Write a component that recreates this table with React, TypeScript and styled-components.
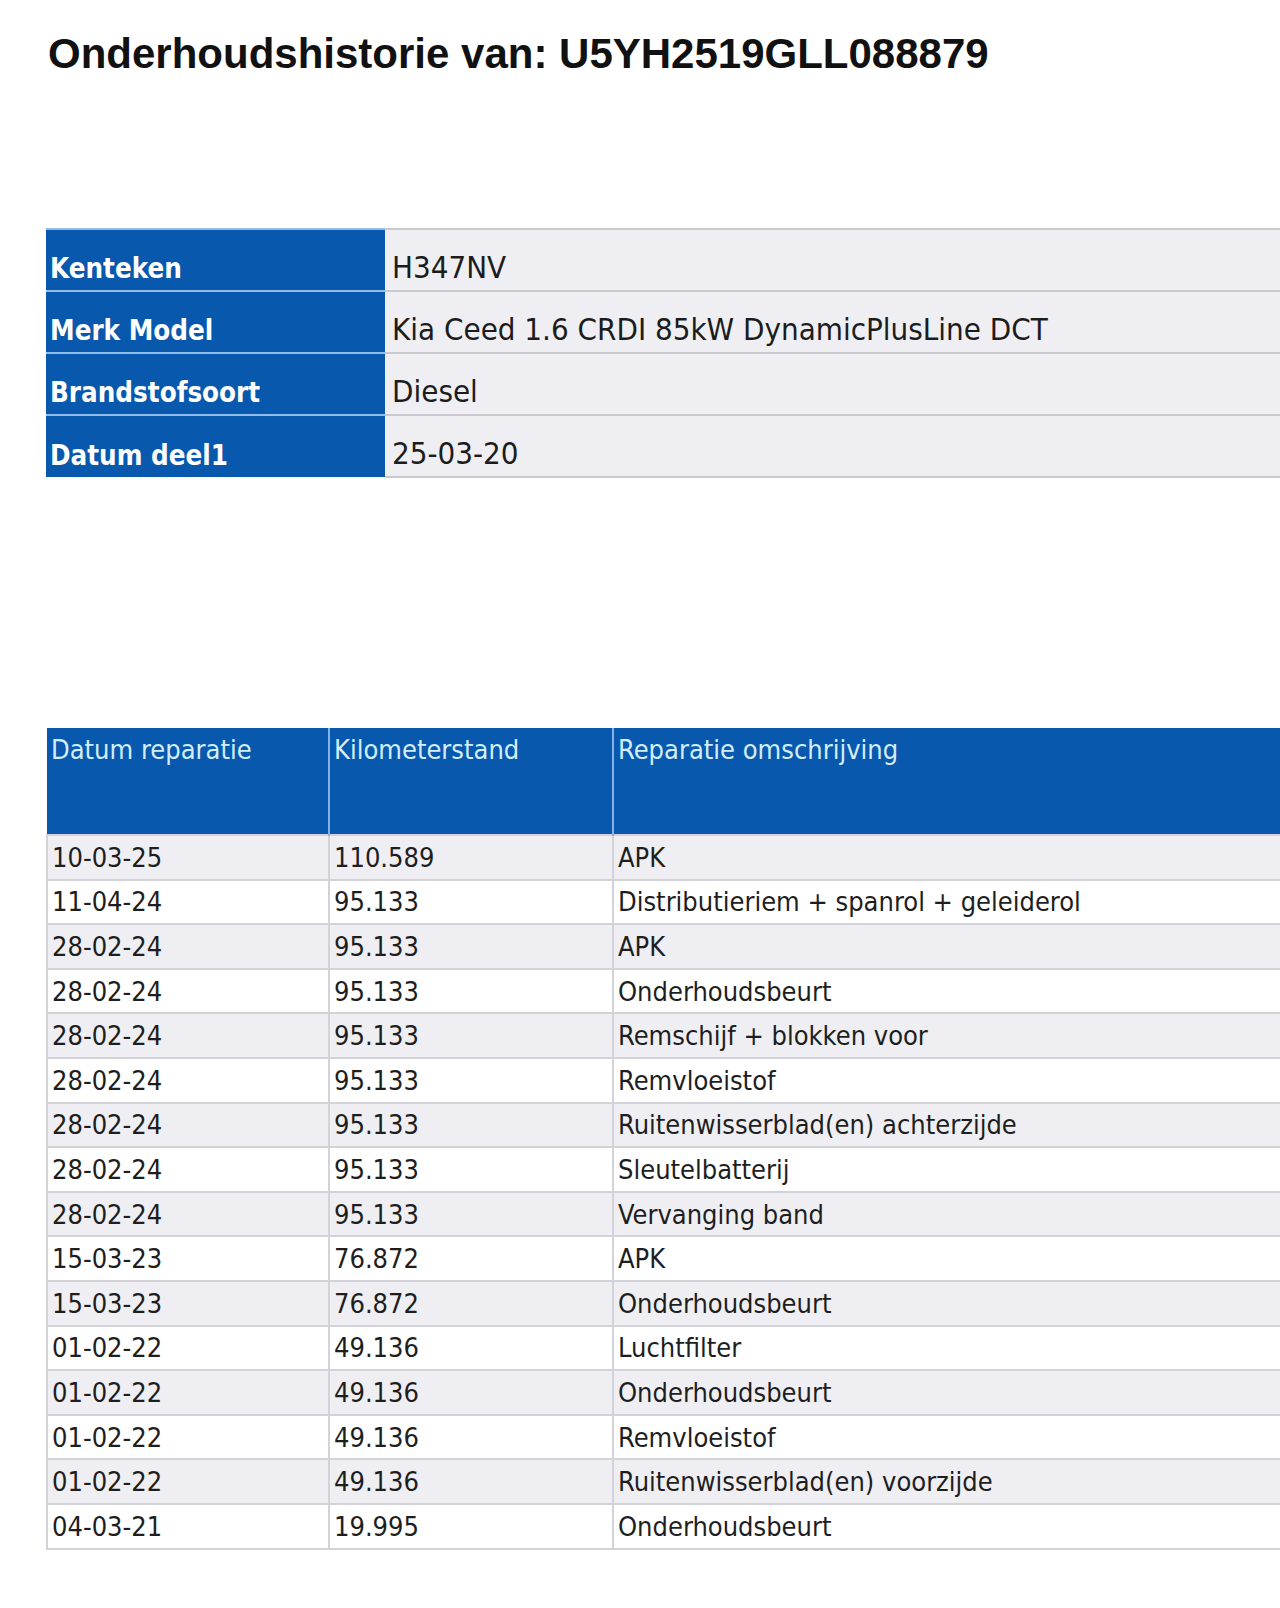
import React from "react";
import styled, { createGlobalStyle } from "styled-components";

const GlobalStyle = createGlobalStyle`
  html, body {
    margin: 0;
    padding: 0;
    background: #ffffff;
    overflow: hidden;
  }
  body {
    width: 1280px;
    height: 1608px;
  }
`;

const Page = styled.div`
  width: 1280px;
  height: 1608px;
  overflow: hidden;
  padding: 0 0 0 46px;
  box-sizing: border-box;
  font-family: "DejaVu Sans Condensed", "DejaVu Sans", sans-serif;
`;

const Title = styled.h1`
  margin: 0;
  padding: 29px 0 0 2px;
  height: 198px;
  box-sizing: border-box;
  font-family: "Liberation Sans", Arial, sans-serif;
  font-weight: 700;
  font-size: 42px;
  line-height: 50px;
  color: #111111;
  white-space: nowrap;
`;

const InfoTable = styled.table`
  width: 1300px;
  border-collapse: collapse;
  table-layout: fixed;
  margin-top: 30px;
`;

const LabelCell = styled.th`
  width: 339px;
  height: 62px;
  box-sizing: border-box;
  background: #0858ad;
  color: #ffffff;
  font-weight: 700;
  font-size: 27.5px;
  text-align: left;
  vertical-align: bottom;
  padding: 0 4px 6px 4px;
  border-top: 2px solid #93bde9;
`;

const ValueCell = styled.td`
  height: 62px;
  box-sizing: border-box;
  background: #efeff3;
  color: #1c1c1c;
  font-size: 31px;
  vertical-align: bottom;
  padding: 0 6px 5px 7px;
  border-top: 2px solid #c9c9cf;
  border-bottom: 2px solid #c9c9cf;
  white-space: nowrap;
`;

const HistoryTable = styled.table`
  width: 1300px;
  border-collapse: collapse;
  table-layout: fixed;
  margin-top: 250px;
`;

const HeadCell = styled.th<{ $w?: number }>`
  width: ${(p) => (p.$w ? `${p.$w}px` : "auto")};
  height: 107px;
  box-sizing: border-box;
  background: #0858ad;
  color: #d2eefc;
  font-weight: 400;
  font-size: 27px;
  text-align: left;
  vertical-align: top;
  padding: 6px 4px 0 4px;
  border-left: 2px solid #86b3e6;
  &:first-child {
    border-left: none;
  }
`;

const Row = styled.tr<{ $alt: boolean }>`
  background: ${(p) => (p.$alt ? "#ffffff" : "#efeff3")};
`;

const Cell = styled.td`
  height: 44.6px;
  box-sizing: border-box;
  color: #1e1e1e;
  font-size: 27px;
  padding: 0 4px;
  vertical-align: middle;
  border-top: 2px solid #d2d2d8;
  border-left: 2px solid #d2d2d8;
  border-bottom: 2px solid #d2d2d8;
  white-space: nowrap;
`;

const info: [string, string][] = [
  ["Kenteken", "H347NV"],
  ["Merk Model", "Kia Ceed 1.6 CRDI 85kW DynamicPlusLine DCT"],
  ["Brandstofsoort", "Diesel"],
  ["Datum deel1", "25-03-20"],
];

const history: [string, string, string][] = [
  ["10-03-25", "110.589", "APK"],
  ["11-04-24", "95.133", "Distributieriem + spanrol + geleiderol"],
  ["28-02-24", "95.133", "APK"],
  ["28-02-24", "95.133", "Onderhoudsbeurt"],
  ["28-02-24", "95.133", "Remschijf + blokken voor"],
  ["28-02-24", "95.133", "Remvloeistof"],
  ["28-02-24", "95.133", "Ruitenwisserblad(en) achterzijde"],
  ["28-02-24", "95.133", "Sleutelbatterij"],
  ["28-02-24", "95.133", "Vervanging band"],
  ["15-03-23", "76.872", "APK"],
  ["15-03-23", "76.872", "Onderhoudsbeurt"],
  ["01-02-22", "49.136", "Luchtfilter"],
  ["01-02-22", "49.136", "Onderhoudsbeurt"],
  ["01-02-22", "49.136", "Remvloeistof"],
  ["01-02-22", "49.136", "Ruitenwisserblad(en) voorzijde"],
  ["04-03-21", "19.995", "Onderhoudsbeurt"],
];

export default function App() {
  return (
    <>
      <GlobalStyle />
      <Page>
        <Title>Onderhoudshistorie van: U5YH2519GLL088879</Title>
        <InfoTable>
          <tbody>
            {info.map(([label, value]) => (
              <tr key={label}>
                <LabelCell>{label}</LabelCell>
                <ValueCell>{value}</ValueCell>
              </tr>
            ))}
          </tbody>
        </InfoTable>
        <HistoryTable>
          <thead>
            <tr>
              <HeadCell $w={282}>Datum reparatie</HeadCell>
              <HeadCell $w={284}>Kilometerstand</HeadCell>
              <HeadCell>Reparatie omschrijving</HeadCell>
            </tr>
          </thead>
          <tbody>
            {history.map(([d, km, desc], i) => (
              <Row key={i} $alt={i % 2 === 1}>
                <Cell>{d}</Cell>
                <Cell>{km}</Cell>
                <Cell>{desc}</Cell>
              </Row>
            ))}
          </tbody>
        </HistoryTable>
      </Page>
    </>
  );
}
